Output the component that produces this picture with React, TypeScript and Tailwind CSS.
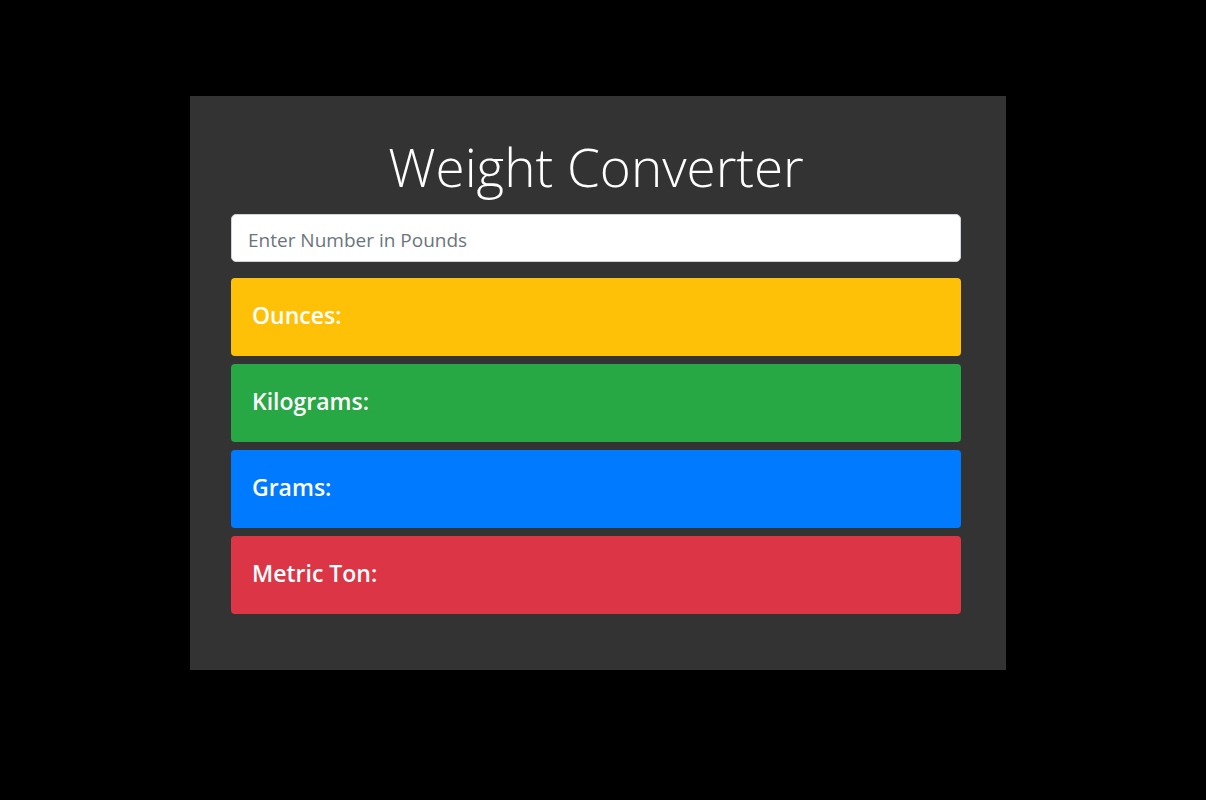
export default function App() {
  const rows = [
    { label: "Ounces:", bg: "bg-[#ffc107]" },
    { label: "Kilograms:", bg: "bg-[#28a745]" },
    { label: "Grams:", bg: "bg-[#007bff]" },
    { label: "Metric Ton:", bg: "bg-[#dc3545]" },
  ];

  return (
    <div className="min-h-[800px] bg-black pt-[96px] pl-[190px] font-['Open_Sans',sans-serif]">
      <div className="w-[816px] bg-[#333333] pl-[41px] pr-[45px] pt-[37px] pb-[56px]">
        {/* Title */}
        <h1 className="text-center text-[53px] leading-[67px] font-light text-white">
          Weight Converter
        </h1>

        {/* Pounds input */}
        <input
          type="text"
          placeholder="Enter Number in Pounds"
          className="mt-[14px] block h-[48px] w-full rounded-[5px] border border-[#ced4da] bg-white px-[16px] pt-[3px] text-[19px] text-[#495057] placeholder:text-[#6c757d] outline-none"
        />

        {/* Result cards */}
        <div className="mt-[16px] flex flex-col gap-[8px]">
          {rows.map((row) => (
            <div
              key={row.label}
              className={`${row.bg} flex h-[78px] items-center rounded-[4px] px-[21px] pb-[3px]`}
            >
              <h4 className="text-[23px] font-semibold text-white">{row.label}</h4>
            </div>
          ))}
        </div>
      </div>
    </div>
  );
}
